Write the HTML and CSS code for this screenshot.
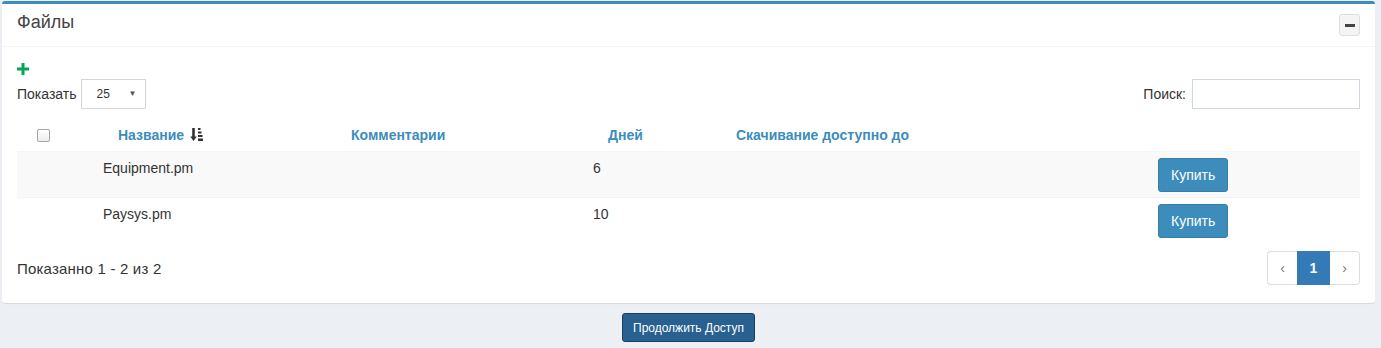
FILE: index.html
```html
<!DOCTYPE html>
<html lang="ru">
<head>
  <meta charset="UTF-8">
  <title>Файлы</title>
  <link rel="stylesheet" href="styles.css">
</head>
<body>

<div class="wrapper">
  <div class="box">
    <div class="box-header">
      <h3 class="box-title">Файлы</h3>
      <button class="btn-tool" title="Свернуть"><span class="minus"></span></button>
    </div>

    <div class="box-body">
      <div class="add-row">
        <svg class="plus" width="12" height="12" viewBox="0 0 12 12"><path d="M4.5 0h3v4.5H12v3H7.5V12h-3V7.5H0v-3h4.5z" fill="#00a65a"/></svg>
      </div>

      <div class="controls">
        <label class="length">Показать
          <span class="select">25 <span class="caret">&#9660;</span></span>
        </label>
        <label class="search">Поиск: <input type="text"></label>
      </div>

      <table class="files">
        <colgroup>
          <col style="width:71px">
          <col style="width:248px">
          <col style="width:242px">
          <col style="width:143px">
          <col style="width:422px">
          <col style="width:217px">
        </colgroup>
        <thead>
          <tr>
            <th class="col-check"><input type="checkbox" class="check"></th>
            <th class="shift">Название
              <svg class="sort" width="13" height="13" viewBox="0 0 13 13">
                <path d="M2.2 0h2.6v8.5h2l-3.3 4.5-3.3-4.5h2z" fill="#333"/>
                <rect x="8" y="0" width="2.5" height="2" fill="#333"/>
                <rect x="8" y="3.5" width="3.5" height="2" fill="#333"/>
                <rect x="8" y="7" width="4.5" height="2" fill="#333"/>
                <rect x="8" y="10.5" width="5" height="2.5" fill="#333"/>
              </svg>
            </th>
            <th>Комментарии</th>
            <th class="shift">Дней</th>
            <th>Скачивание доступно до</th>
            <th></th>
          </tr>
        </thead>
        <tbody>
          <tr class="odd">
            <td></td>
            <td>Equipment.pm</td>
            <td></td>
            <td>6</td>
            <td></td>
            <td><button class="btn-buy">Купить</button></td>
          </tr>
          <tr>
            <td></td>
            <td>Paysys.pm</td>
            <td></td>
            <td>10</td>
            <td></td>
            <td><button class="btn-buy">Купить</button></td>
          </tr>
        </tbody>
      </table>

      <div class="table-footer">
        <div class="info">Показанно 1 - 2 из 2</div>
        <ul class="pagination">
          <li class="arrow">&lsaquo;</li>
          <li class="active">1</li>
          <li class="arrow">&rsaquo;</li>
        </ul>
      </div>
    </div>
  </div>

  <div class="actions">
    <button class="btn-continue">Продолжить Доступ</button>
  </div>
</div>

</body>
</html>
```

FILE: styles.css
```css
body {
  margin: 0;
  background-color: #ecf0f5;
  font-family: "Liberation Sans", Arial, sans-serif;
  font-size: 14px;
  color: #333;
}
.wrapper {
  padding: 1px 6px 0 2px;
}
.box {
  background-color: #fff;
  border-top: 3px solid #3c8dbc;
  border-radius: 3px;
  box-shadow: 0 1px 1px rgba(0, 0, 0, 0.1);
}
.box-header {
  display: flex;
  align-items: flex-start;
  justify-content: space-between;
  padding: 8px 15px 10px;
  border-bottom: 1px solid #f4f4f4;
}
.box-title {
  margin: 0;
  font-size: 18px;
  font-weight: normal;
  line-height: 20px;
  color: #444;
}
.btn-tool {
  width: 21px;
  height: 22px;
  margin-top: 2px;
  padding: 0;
  display: flex;
  align-items: center;
  justify-content: center;
  background-color: #f4f4f4;
  border: 1px solid #ddd;
  border-radius: 3px;
}
.minus {
  display: block;
  width: 10px;
  height: 3px;
  background-color: #444;
}
.box-body {
  padding: 10px 15px 10px;
}
.add-row {
  height: 20px;
  margin-top: 2px;
  display: flex;
  align-items: center;
}
.controls {
  display: flex;
  justify-content: space-between;
  align-items: center;
  height: 29px;
}
.length,
.search {
  display: flex;
  align-items: center;
}
.select {
  display: flex;
  align-items: center;
  justify-content: space-between;
  box-sizing: border-box;
  width: 65px;
  height: 30px;
  margin-left: 4px;
  padding: 0 8px 0 15px;
  border: 1px solid #d2d6de;
  font-size: 12px;
  color: #333;
}
.caret {
  font-size: 8px;
  color: #555;
}
.search input {
  box-sizing: border-box;
  width: 168px;
  height: 30px;
  margin-left: 6px;
  border: 1px solid #d2d6de;
  padding: 0 6px;
}
.files {
  width: 100%;
  table-layout: fixed;
  border-collapse: collapse;
  margin-top: 10px;
}
.files th {
  padding: 7px 8px 6px 15px;
  line-height: 20px;
  text-align: left;
  font-size: 14px;
  font-weight: bold;
  color: #3c8dbc;
  border-bottom: 1px solid #f4f4f4;
  white-space: nowrap;
}
.files th.shift {
  padding-left: 30px;
}
.files th.col-check {
  padding-left: 20px;
}
.check {
  appearance: none;
  display: block;
  margin: 0;
  width: 13px;
  height: 13px;
  border: 1px solid #a6a6a6;
  border-radius: 2px;
  background: linear-gradient(#fff, #ededed);
}
.sort {
  vertical-align: -1px;
  margin-left: 2px;
}
.files td {
  padding: 6px 8px 5px 15px;
  line-height: 20px;
  vertical-align: top;
  border-top: 1px solid #f4f4f4;
}
.files tr.odd td {
  background-color: #f9f9f9;
}
.btn-buy {
  height: 34px;
  padding: 6px 12px;
  font-family: inherit;
  font-size: 14px;
  color: #fff;
  background-color: #3c8dbc;
  border: 1px solid #367fa9;
  border-radius: 3px;
}
.table-footer {
  display: flex;
  justify-content: space-between;
  align-items: center;
  margin: 8px 0 8px;
}
.info {
  font-size: 15px;
  letter-spacing: 0.2px;
}
.pagination {
  display: flex;
  margin: 0;
  padding: 0;
  list-style: none;
}
.pagination li {
  box-sizing: border-box;
  height: 34px;
  line-height: 32px;
  text-align: center;
  border: 1px solid #ddd;
  color: #777;
}
.pagination .arrow {
  width: 30px;
}
.pagination .arrow:first-child {
  border-radius: 4px 0 0 4px;
  border-right: none;
}
.pagination .arrow:last-child {
  border-radius: 0 4px 4px 0;
  border-left: none;
}
.pagination .active {
  width: 33px;
  background-color: #337ab7;
  border-color: #337ab7;
  color: #fff;
  font-weight: bold;
}
.actions {
  display: flex;
  justify-content: center;
  padding-top: 10px;
}
.btn-continue {
  height: 29px;
  padding: 0 10px;
  font-family: inherit;
  font-size: 12px;
  color: #fff;
  background-color: #286090;
  border: 1px solid #1c3e5e;
  border-radius: 3px;
}
```
